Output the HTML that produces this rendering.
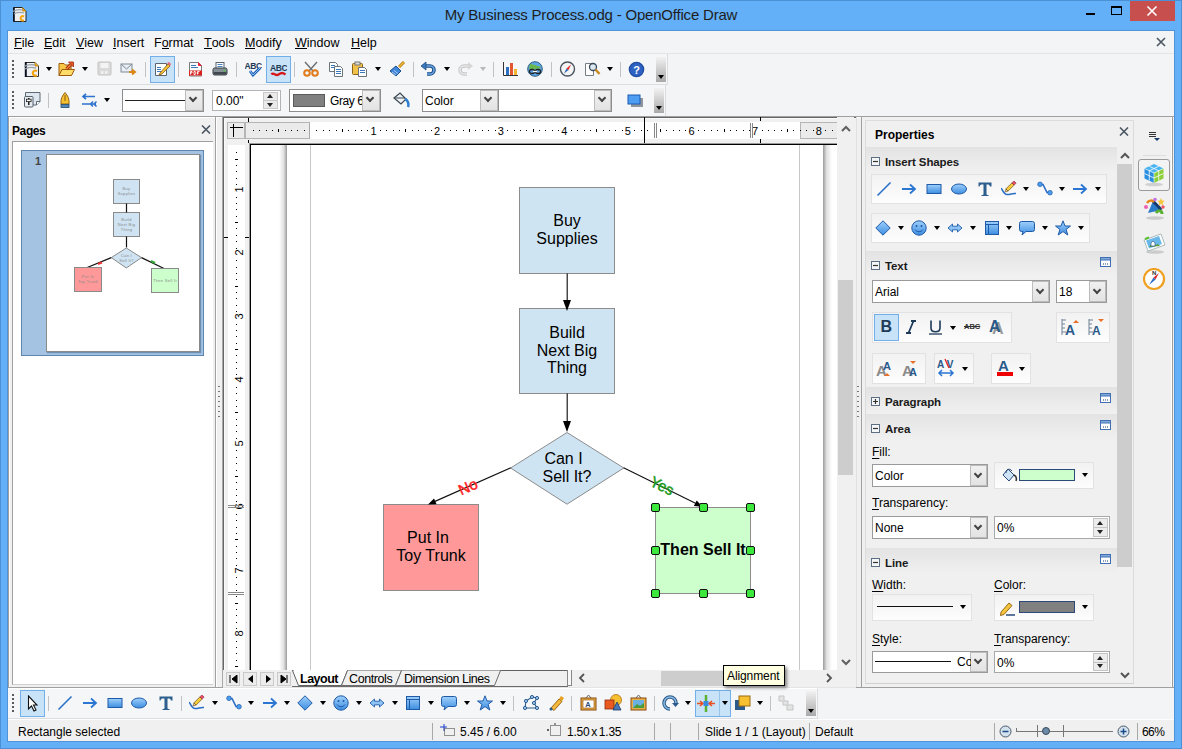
<!DOCTYPE html>
<html><head><meta charset="utf-8">
<style>
*{box-sizing:border-box;margin:0;padding:0}
html,body{width:1182px;height:749px;overflow:hidden}
body{position:relative;background:#63b0f8;font-family:"Liberation Sans",sans-serif;font-size:12px;color:#000}
.a,svg{position:absolute}
.t{position:absolute;white-space:nowrap;line-height:1}
#frame{left:0;top:0;width:1182px;height:749px;border:1px solid #4b8fd4}
#title{left:0;top:7px;width:1182px;text-align:center;font-size:15px;color:#1e1e1e;letter-spacing:-0.2px}
#client{left:7px;top:30px;width:1168px;height:712px;background:#f3f4f6;border:1px solid #4f93d8}
.menu{top:37px;font-size:12.5px;color:#000}
.menu u{text-decoration:none;border-bottom:1px solid #000;display:inline-block;line-height:10px}
.sep{position:absolute;width:1px;height:15px;background:#c2c2c2}
.grip{position:absolute;width:2px;background:repeating-linear-gradient(#5a5a5a 0 2px,transparent 2px 4px)}
.dd{position:absolute;width:0;height:0;border-left:3.5px solid transparent;border-right:3.5px solid transparent;border-top:4px solid #000}
.hl{position:absolute;background:#c8e2f8;border:1px solid #72aee8}
.combo{position:absolute;background:#fff;border:1px solid #a9a9a9}
.cbtn{position:absolute;background:linear-gradient(#f0f0f0,#e3e3e3);border:1px solid #bcbcbc}
.chev{position:absolute;width:7px;height:7px;border-right:2px solid #444;border-bottom:2px solid #444;transform:rotate(45deg)}
.tbend{position:absolute;width:10px;background:linear-gradient(#f2f2f2,#a9a9a9)}
.tbend:after{content:"";position:absolute;left:2px;bottom:3px;border-left:3px solid transparent;border-right:3px solid transparent;border-top:4px solid #000}
</style></head><body>
<div class="a" id="frame"></div>
<div class="a" id="client"></div>
<div class="t" id="title">My Business Process.odg - OpenOffice Draw</div>
<!-- app icon -->
<svg style="left:13px;top:7px" width="14" height="15" viewBox="0 0 14 15"><path d="M.5 .5h9l3.5 3.5v10.5H.5z" fill="#eef0f2" stroke="#222"/><path d="M1 .5v14" stroke="#0a1020" stroke-width="1.6"/><path d="M9.5 .5v3.5H13" fill="#f0b020" stroke="#c88a10"/><path d="M-1 5c3-2 6-3 11-2M1 7c3-2 6-2 10-1" stroke="#9aa3ac" stroke-width="1.2" fill="none"/><path d="M11 9.5c-4-2-5 5 0 4" stroke="#f5a412" stroke-width="2" fill="none"/></svg>
<!-- window buttons -->
<div class="a" style="left:1086px;top:13px;width:9px;height:2px;background:#000"></div>
<div class="a" style="left:1111px;top:6px;width:11px;height:9px;border:1px solid #000;border-top-width:2px"></div>
<div class="a" style="left:1130px;top:1px;width:45px;height:20px;background:#c7504e"></div>
<svg style="left:1146px;top:5px" width="12" height="12" viewBox="0 0 12 12"><path d="M1.5 1.5l9 9M10.5 1.5l-9 9" stroke="#fff" stroke-width="1.6"/></svg>
<!-- menubar -->
<div class="a" style="left:8px;top:53px;width:1166px;height:1px;background:#e3e4e6"></div>
<div class="t menu" style="left:14px"><u>F</u>ile</div>
<div class="t menu" style="left:44px"><u>E</u>dit</div>
<div class="t menu" style="left:76px"><u>V</u>iew</div>
<div class="t menu" style="left:113px"><u>I</u>nsert</div>
<div class="t menu" style="left:154px">F<u>o</u>rmat</div>
<div class="t menu" style="left:204px"><u>T</u>ools</div>
<div class="t menu" style="left:245px"><u>M</u>odify</div>
<div class="t menu" style="left:295px"><u>W</u>indow</div>
<div class="t menu" style="left:351px"><u>H</u>elp</div>
<svg style="left:1156px;top:37px" width="10" height="10" viewBox="0 0 10 10"><path d="M1 1l8 8M9 1l-8 8" stroke="#4a5561" stroke-width="1.6"/></svg>
<!-- toolbar 1 -->
<div class="a" style="left:8px;top:54px;width:660px;height:31px;background:#f5f6f7;border-right:1px solid #dcdddf;border-bottom:1px solid #dcdddf"></div>
<div class="grip" style="left:12px;top:60px;height:18px"></div>
<!-- new -->
<svg style="left:24px;top:61px" width="16" height="16" viewBox="0 0 16 16"><path d="M1.5 1.5h9.5l3.5 3.5v10.5h-13z" fill="#eef0f2" stroke="#333"/><path d="M1.8 1v15" stroke="#0a1020" stroke-width="2"/><path d="M11 1.5v3.5h3.5" fill="#f0b020" stroke="#c88a10"/><path d="M-1 6c3-2 7-3 12-2M1 8c3-2 7-2 11-1" stroke="#9aa3ac" stroke-width="1.3" fill="none"/><path d="M13 10c-5-2.5-6 6 0 4.5" stroke="#f5a412" stroke-width="2.2" fill="none"/></svg>
<div class="dd" style="left:46px;top:67px"></div>
<!-- open -->
<svg style="left:58px;top:61px" width="17" height="16" viewBox="0 0 17 16"><path d="M1 2.5h5l1.5 1.5h5.5V14.5H1z" fill="#f6c846" stroke="#a05a10"/><path d="M4 8.5h12.5l-3 6H1z" fill="#fddc68" stroke="#a05a10"/><path d="M8.5 8l5-5" stroke="#a03010" stroke-width="3.2"/><path d="M8.5 8l5-5" stroke="#f27a3a" stroke-width="1.6"/><path d="M10.5 1h5v5z" fill="#e85a20" stroke="#a03010" stroke-width=".8"/></svg>
<div class="dd" style="left:82px;top:67px"></div>
<!-- save gray -->
<svg style="left:97px;top:61px" width="15" height="15" viewBox="0 0 15 15"><rect x="1" y="1" width="13" height="13" rx="1" fill="#dadada" stroke="#c4c4c4"/><rect x="3.5" y="2" width="8" height="5" fill="#f4f4f4"/><rect x="4" y="10" width="2.5" height="3" fill="#f0f0f0"/><rect x="8" y="10" width="2.5" height="3" fill="#f0f0f0"/></svg>
<!-- mail -->
<svg style="left:120px;top:62px" width="17" height="14" viewBox="0 0 17 14"><rect x="1" y="2" width="11" height="8" fill="#e8eef4" stroke="#7f8b96"/><path d="M1 2l5.5 5 5.5-5" stroke="#7f8b96" fill="none"/><path d="M9 10h5M12 7.5l3 2.5-3 2.5" stroke="#d9891a" stroke-width="2" fill="none"/></svg>
<div class="sep" style="left:145px;top:62px"></div>
<div class="hl" style="left:150px;top:56px;width:25px;height:27px"></div>
<svg style="left:154px;top:61px" width="17" height="16" viewBox="0 0 17 16"><path d="M1.5 2.5h11v12h-11z" fill="#fff" stroke="#5d6670"/><path d="M3 6.5h4M3 8.5h4M3 10.5h5" stroke="#3a78b8"/><path d="M6 12l8-9 2 2-8 8-3 1z" fill="#f6c43a" stroke="#8d5a10" stroke-width=".8"/><path d="M13 2l2-1 2 2-1 2z" fill="#e46a7a"/></svg>
<div class="sep" style="left:178px;top:62px"></div>
<!-- pdf -->
<svg style="left:188px;top:61px" width="15" height="16" viewBox="0 0 15 16"><path d="M1.5 1.5h9l3 3V15h-12z" fill="#fafafa" stroke="#7a7a7a"/><path d="M3 4.5h5M3 6.5h7" stroke="#3a78b8"/><path d="M10.5 1.5v3h3" fill="#e23" stroke="#e23"/><rect x="1" y="9.5" width="13" height="5" fill="#d8221f"/><path d="M2.5 13.5v-3h1.5v1.5h-1.5M6 10.5v3h1.2l.8-1.5-.8-1.5zM9.5 13.5v-3h2M9.5 12h1.5" stroke="#fff" stroke-width=".9" fill="none"/></svg>
<!-- print -->
<svg style="left:212px;top:61px" width="16" height="16" viewBox="0 0 16 16"><rect x="4" y="1.5" width="8" height="6" fill="#fff" stroke="#5a6470"/><path d="M5.5 3.5h5M5.5 5.5h5" stroke="#3a78b8" stroke-width=".9"/><rect x="1" y="7" width="14" height="7" rx="1.5" fill="#868e96" stroke="#3b4249"/><rect x="1.5" y="11" width="13" height="2.5" fill="#40474e"/><circle cx="12.5" cy="9.5" r="1" fill="#4ec23d"/></svg>
<div class="sep" style="left:236px;top:62px"></div>
<!-- spell -->
<svg style="left:245px;top:61px" width="17" height="16" viewBox="0 0 17 16"><text x="-.5" y="7.5" font-family="Liberation Sans" font-weight="bold" font-size="8.5" letter-spacing="-.4" fill="#1f3a55">ABC</text><path d="M5 10l3 4 7-7" stroke="#1f5fb5" stroke-width="2.8" fill="none"/><path d="M5 10l3 4 7-7" stroke="#8ec3f5" stroke-width="1" fill="none"/></svg>
<div class="sep" style="left:262px;top:61px;height:0"></div>
<div class="hl" style="left:266px;top:56px;width:25px;height:27px"></div>
<svg style="left:270px;top:62px" width="17" height="15" viewBox="0 0 17 15"><text x="0" y="8.5" font-family="Liberation Sans" font-weight="bold" font-size="8.5" letter-spacing="-.4" fill="#1f3a55">ABC</text><path d="M1.5 12.5c2-3 4 2 7 0s4-2 7 0" stroke="#d81818" stroke-width="2.4" fill="none"/></svg>
<div class="sep" style="left:294px;top:62px"></div>
<!-- cut -->
<svg style="left:302px;top:61px" width="18" height="16" viewBox="0 0 18 16"><path d="M3 1l8 9M15 1l-8 9" stroke="#6d7378" stroke-width="1.5"/><circle cx="5" cy="12" r="2.8" fill="none" stroke="#e07a1a" stroke-width="2"/><circle cx="13" cy="12" r="2.8" fill="none" stroke="#e07a1a" stroke-width="2"/></svg>
<!-- copy -->
<svg style="left:328px;top:61px" width="16" height="16" viewBox="0 0 16 16"><path d="M1.5 1.5h6l2 2v7h-8z" fill="#fff" stroke="#6b737b"/><path d="M3 4.5h4M3 6.5h4" stroke="#3a78b8"/><path d="M6.5 5.5h6l2 2v8h-8z" fill="#fff" stroke="#6b737b"/><path d="M8 8.5h5M8 10.5h5M8 12.5h5" stroke="#3a78b8"/></svg>
<!-- paste -->
<svg style="left:351px;top:61px" width="17" height="16" viewBox="0 0 17 16"><rect x="1.5" y="2.5" width="10" height="11" rx="1" fill="#f2c14a" stroke="#8c6418"/><rect x="4" y="1" width="5" height="3" fill="#ddd" stroke="#777"/><path d="M7.5 6.5h6l2 2v7h-8z" fill="#fff" stroke="#6b737b"/><path d="M9 9.5h5M9 11.5h5" stroke="#3a78b8"/></svg>
<div class="dd" style="left:375px;top:67px"></div>
<!-- clone -->
<svg style="left:389px;top:61px" width="17" height="16" viewBox="0 0 17 16"><path d="M1 10l6-5 5 5-5 5z" fill="#3f86d8" stroke="#1b4f8f"/><path d="M3 11l4 3M5 9.5l4 3" stroke="#a8cdf4"/><path d="M10 6l5-5" stroke="#b07a10" stroke-width="3"/><path d="M10 6l5-5" stroke="#f0b93a" stroke-width="1.5"/></svg>
<div class="sep" style="left:413px;top:62px"></div>
<!-- undo -->
<svg style="left:420px;top:61px" width="17" height="16" viewBox="0 0 17 16"><path d="M4 5h6a4 4 0 0 1 0 8H7" stroke="#1d4e86" stroke-width="3.6" fill="none"/><path d="M4 5h6a4 4 0 0 1 0 8H7" stroke="#6aa6e3" stroke-width="1.6" fill="none"/><path d="M1 5l5-4v8z" fill="#3c78bd" stroke="#1d4e86" stroke-width=".8"/></svg>
<div class="dd" style="left:444px;top:67px"></div>
<!-- redo gray -->
<svg style="left:457px;top:61px" width="17" height="16" viewBox="0 0 17 16"><path d="M13 5H7a4 4 0 0 0 0 8h3" stroke="#c8c8c8" stroke-width="3.6" fill="none"/><path d="M13 5H7a4 4 0 0 0 0 8h3" stroke="#e6e6e6" stroke-width="1.6" fill="none"/><path d="M16 5l-5-4v8z" fill="#d6d6d6"/></svg>
<div class="dd" style="left:480px;top:67px;border-top-color:#b8b8b8"></div>
<div class="sep" style="left:493px;top:62px"></div>
<!-- chart -->
<svg style="left:502px;top:61px" width="17" height="16" viewBox="0 0 17 16"><path d="M1.5 1v13.5H16" stroke="#333" fill="none"/><rect x="4" y="6" width="3" height="8" fill="#2f6fbf"/><rect x="8" y="2" width="3" height="12" fill="#e4572e"/><rect x="12" y="8" width="3" height="6" fill="#f2b631"/></svg>
<!-- globe -->
<svg style="left:527px;top:61px" width="16" height="16" viewBox="0 0 16 16"><circle cx="8" cy="8" r="7.3" fill="#5ea6e6" stroke="#2d5e80"/><path d="M3 3c2 0 3 1 5 1s2 2 4 1l2 2c-2 1-3 0-5 1S5 7 2 8z" fill="#6ab84a"/><rect x="2.5" y="8.5" width="5" height="4" rx="2" fill="none" stroke="#222" stroke-width="1.3"/><rect x="8.5" y="8.5" width="5" height="4" rx="2" fill="none" stroke="#222" stroke-width="1.3"/><path d="M6 10.5h4" stroke="#fff" stroke-width="1.3"/></svg>
<div class="sep" style="left:551px;top:62px"></div>
<!-- navigator -->
<svg style="left:559px;top:61px" width="17" height="16" viewBox="0 0 17 16"><circle cx="8.5" cy="8" r="7" fill="#f4f4f4" stroke="#4b5560" stroke-width="1.4"/><path d="M12 3.5L7.5 7.5 9.5 9z" fill="#e22"/><path d="M5 12.5l2.5-5 2 1.5z" fill="#2c64b0"/></svg>
<!-- zoom -->
<svg style="left:584px;top:61px" width="17" height="16" viewBox="0 0 17 16"><path d="M1.5 2.5h8v12h-8z" fill="#fff" stroke="#747c84"/><circle cx="9" cy="6" r="3.5" fill="#dbe8f4" stroke="#3a4a5a" stroke-width="1.3"/><path d="M11.5 8.5l4 4.5" stroke="#c88a1e" stroke-width="2.4"/></svg>
<div class="dd" style="left:607px;top:67px"></div>
<div class="sep" style="left:620px;top:62px"></div>
<!-- help -->
<svg style="left:628px;top:61px" width="17" height="17" viewBox="0 0 17 17"><circle cx="8.5" cy="8.5" r="7.8" fill="#1f4ea3"/><circle cx="8.5" cy="8.5" r="6.5" fill="#2e62c2"/><text x="8.5" y="13" text-anchor="middle" font-family="Liberation Sans" font-weight="bold" font-size="11" fill="#fff">?</text></svg>
<div class="tbend" style="left:656px;top:57px;height:25px"></div>
<!-- toolbar 2 -->
<div class="a" style="left:8px;top:85px;width:658px;height:31px;background:#f5f6f7;border-right:1px solid #dcdddf"></div>
<div class="grip" style="left:12px;top:91px;height:18px"></div>
<svg style="left:24px;top:92px" width="17" height="16" viewBox="0 0 17 16"><path d="M1.5.5h14.5v9l-3.5 3.5H1.5z" fill="#dde5ee" stroke="#5f6a75"/><path d="M12.5 13v-3.5H16" fill="#fff" stroke="#5f6a75"/><rect x=".5" y="4.5" width="8.5" height="10.5" rx="1" fill="#e8ecf0" stroke="#56616c"/><path d="M4.8 6v7" stroke="#111" stroke-width="1.4"/><rect x="2.5" y="7.2" width="4.6" height="2.4" fill="#fff" stroke="#222" stroke-width=".8"/></svg>
<div class="sep" style="left:48px;top:93px"></div>
<svg style="left:60px;top:92px" width="10" height="16" viewBox="0 0 10 16"><path d="M5 .5C8 4 9.5 7 9 12H1C.5 7 2 4 5 .5z" fill="#f6c12f" stroke="#8a5a12" stroke-width=".9"/><path d="M5 3v6" stroke="#8a5a12"/><rect x="1" y="12.5" width="8" height="3" fill="#4f86b8" stroke="#234a6a" stroke-width=".8"/></svg>
<svg style="left:81px;top:93px" width="17" height="14" viewBox="0 0 17 14"><path d="M2 3.5h12M5 .8L2 3.5 5 6.2" stroke="#2e73cf" stroke-width="1.7" fill="none"/><path d="M1 11h14M12 8.5L9.5 11l2.5 2.5M15.5 8.5L13 11l2.5 2.5" stroke="#2e73cf" stroke-width="1.5" fill="none"/></svg>
<div class="dd" style="left:104px;top:98px"></div>
<!-- line style combo -->
<div class="combo" style="left:122px;top:89px;width:82px;height:23px;border-color:#8e8e8e"></div>
<div class="a" style="left:125px;top:100px;width:60px;height:1px;background:#222"></div>
<div class="cbtn" style="left:185px;top:90px;width:18px;height:21px"></div>
<div class="chev" style="left:190px;top:95px;width:6px;height:6px;border-width:0 2px 2px 0"></div>
<!-- width spin -->
<div class="combo" style="left:212px;top:90px;width:69px;height:21px;border-color:#b3b3b3"></div>
<div class="t" style="left:216px;top:95px;font-size:12px">0.00"</div>
<div class="a" style="left:263px;top:92px;width:15px;height:17px;background:#eaeaea;border:1px solid #c9c9c9"></div>
<div class="a" style="left:263px;top:100px;width:15px;height:1px;background:#c9c9c9"></div>
<div class="a" style="left:267px;top:94px;border-left:3.5px solid transparent;border-right:3.5px solid transparent;border-bottom:4px solid #222"></div>
<div class="a" style="left:267px;top:103px;border-left:3.5px solid transparent;border-right:3.5px solid transparent;border-top:4px solid #222"></div>
<!-- color combo -->
<div class="combo" style="left:289px;top:89px;width:92px;height:23px;border-color:#8e8e8e"></div>
<div class="a" style="left:293px;top:94px;width:32px;height:13px;background:#808080;border:1px solid #5a5a5a"></div>
<div class="t" style="left:330px;top:95px;font-size:12px;letter-spacing:-.4px">Gray 6</div>
<div class="cbtn" style="left:362px;top:90px;width:18px;height:21px"></div>
<div class="chev" style="left:367px;top:95px;width:6px;height:6px;border-width:0 2px 2px 0"></div>
<!-- bucket -->
<svg style="left:392px;top:92px" width="18" height="16" viewBox="0 0 18 16"><path d="M2 6l6-5 6 6-5 5z" fill="#eef2f6" stroke="#3b4650" stroke-width="1.2"/><path d="M3 6h10" stroke="#3b4650"/><path d="M13 7c3 1 4 5 3 8" stroke="#2f7fd0" stroke-width="2.5" fill="none"/></svg>
<!-- area combos -->
<div class="combo" style="left:422px;top:89px;width:77px;height:23px;border-color:#8e8e8e"></div>
<div class="t" style="left:425px;top:95px;font-size:12px">Color</div>
<div class="cbtn" style="left:480px;top:90px;width:18px;height:21px"></div>
<div class="chev" style="left:485px;top:95px;width:6px;height:6px;border-width:0 2px 2px 0"></div>
<div class="combo" style="left:498px;top:89px;width:114px;height:23px;border-color:#8e8e8e"></div>
<div class="cbtn" style="left:594px;top:90px;width:17px;height:21px"></div>
<div class="chev" style="left:599px;top:95px;width:6px;height:6px;border-width:0 2px 2px 0"></div>
<!-- shadow -->
<svg style="left:627px;top:93px" width="17" height="15" viewBox="0 0 17 15"><rect x="4" y="5" width="12" height="9" fill="#8f969d"/><rect x="1" y="2" width="12" height="9" fill="#4d9ef2" stroke="#1d5bb0"/></svg>
<div class="tbend" style="left:654px;top:88px;height:25px"></div>
<div class="a" style="left:8px;top:116px;width:1166px;height:1px;background:#a0a0a0"></div>
<div class="a" style="left:8px;top:117px;width:1166px;height:570px;background:#f0f0f0;border-top:1px solid #fff"></div>
<div class="a" style="left:8px;top:116px;width:1px;height:571px;background:#a0a0a0"></div>
<div class="a" style="left:9px;top:117px;width:1px;height:570px;background:#fff"></div>
<div class="a" style="left:215px;top:116px;width:1px;height:571px;background:#a0a0a0"></div>
<div class="a" style="left:216px;top:117px;width:1px;height:570px;background:#fff"></div>
<div class="t" style="left:12px;top:125px;font-weight:bold;font-size:12px;letter-spacing:-.4px">Pages</div>
<svg style="left:201px;top:125px" width="10" height="9" viewBox="0 0 10 9"><path d="M1 .5l8 8M9 .5l-8 8" stroke="#4d5864" stroke-width="1.6"/></svg>
<div class="a" style="left:12px;top:141px;width:201px;height:544px;background:#fff;border-top:1px solid #a0a0a0;border-left:1px solid #a0a0a0;border-bottom:1px solid #d0d0d0"></div>
<div class="a" style="left:21px;top:150px;width:183px;height:206px;background:#a4c2e2;border:1px solid #5f86b0"></div>
<div class="t" style="left:35px;top:156px;font-weight:bold;font-size:11px;color:#444">1</div>
<div class="a" style="left:46px;top:154px;width:154px;height:198px;background:#fff;border:1px solid #8a8a8a;box-shadow:1px 1px 1px #6f8fb0"></div>
<svg style="left:46px;top:154px" width="154" height="198" viewBox="0 0 154 198">
<rect x="67.5" y="25.5" width="26" height="24" fill="#cfe3f2" stroke="#8a8a8a"/>
<rect x="67.5" y="58.5" width="26" height="24" fill="#cfe3f2" stroke="#8a8a8a"/>
<path d="M80.5 49.5v9M80.5 82.5v11" stroke="#111" stroke-width="1.2"/>
<path d="M80.3 94L95.5 103.6 80.3 114 65.3 103.6z" fill="#cfe3f2" stroke="#8a8a8a"/>
<path d="M65.3 103.6L40 114M95.5 103.6L118 114.5" stroke="#111" stroke-width="1.2"/>
<path d="M52 110l4-1.5" stroke="#e33" stroke-width="2"/><path d="M105 107l4 2" stroke="#3a3" stroke-width="2"/>
<rect x="28.5" y="113.5" width="27" height="24" fill="#f99" stroke="#8a8a8a"/>
<rect x="105.5" y="114.5" width="27" height="24" fill="#cfc" stroke="#8a8a8a"/>
<g transform="scale(.5)" style="font-family:'Liberation Sans';font-size:8px;letter-spacing:.6px" fill="#8a8a8a" text-anchor="middle"><text x="161.0" y="72">Buy</text><text x="161.0" y="82">Supplies</text><text x="161.0" y="134">Build</text><text x="161.0" y="144">Next Big</text><text x="161.0" y="154">Thing</text><text x="161.0" y="206">Can I</text><text x="161.0" y="216">Sell It?</text><text x="84.0" y="248">Put In</text><text x="84.0" y="258">Toy Trunk</text><text x="238.0" y="256">Then Sell It</text></g></svg>
<div class="a" style="left:222px;top:117px;width:1px;height:570px;background:#a8a8a8"></div>
<div class="a" style="left:218px;top:386px;width:2px;height:33px;background:repeating-linear-gradient(#777 0 1px,transparent 1px 5px)"></div>
<div class="a" style="left:223px;top:117px;width:634px;height:570px;background:#f0f0f0;border-left:1px solid #666;border-top:1px solid #666"></div>
<div class="a" style="left:224px;top:118px;width:633px;height:1px;background:#fafafa"></div>
<div class="a" style="left:224px;top:118px;width:1px;height:569px;background:#fafafa"></div>
<div class="a" style="left:227px;top:122px;width:18px;height:17px;background:#ebebeb;border:1px solid #b5b5b5"></div>
<div class="a" style="left:233px;top:124px;width:1px;height:13px;background:#000"></div>
<div class="a" style="left:230px;top:127px;width:13px;height:1px;background:#000"></div>
<div class="a" style="left:245px;top:122px;width:592px;height:17px;background:#fff"></div>
<div class="a" style="left:245px;top:122px;width:65px;height:17px;background:#ebebeb;border:1px solid #b5b5b5;border-right-color:#a8a8a8"></div>
<div class="a" style="left:800px;top:122px;width:37px;height:17px;background:#ebebeb;border:1px solid #b5b5b5;border-right:0"></div>
<div class="a" style="left:253px;top:130px;width:1px;height:1px;background:#000"></div>
<div class="a" style="left:259px;top:130px;width:1px;height:1px;background:#000"></div>
<div class="a" style="left:266px;top:130px;width:1px;height:1px;background:#000"></div>
<div class="a" style="left:272px;top:130px;width:1px;height:1px;background:#000"></div>
<div class="a" style="left:278px;top:129px;width:1px;height:3px;background:#000"></div>
<div class="a" style="left:285px;top:130px;width:1px;height:1px;background:#000"></div>
<div class="a" style="left:291px;top:130px;width:1px;height:1px;background:#000"></div>
<div class="a" style="left:297px;top:130px;width:1px;height:1px;background:#000"></div>
<div class="a" style="left:304px;top:130px;width:1px;height:1px;background:#000"></div>
<div class="a" style="left:316px;top:130px;width:1px;height:1px;background:#000"></div>
<div class="a" style="left:323px;top:130px;width:1px;height:1px;background:#000"></div>
<div class="a" style="left:329px;top:130px;width:1px;height:1px;background:#000"></div>
<div class="a" style="left:336px;top:130px;width:1px;height:1px;background:#000"></div>
<div class="a" style="left:342px;top:129px;width:1px;height:3px;background:#000"></div>
<div class="a" style="left:348px;top:130px;width:1px;height:1px;background:#000"></div>
<div class="a" style="left:355px;top:130px;width:1px;height:1px;background:#000"></div>
<div class="a" style="left:361px;top:130px;width:1px;height:1px;background:#000"></div>
<div class="a" style="left:367px;top:130px;width:1px;height:1px;background:#000"></div>
<div class="t" style="left:370.0px;top:126px;font-size:11px;width:7px;text-align:center">1</div>
<div class="a" style="left:380px;top:130px;width:1px;height:1px;background:#000"></div>
<div class="a" style="left:386px;top:130px;width:1px;height:1px;background:#000"></div>
<div class="a" style="left:393px;top:130px;width:1px;height:1px;background:#000"></div>
<div class="a" style="left:399px;top:130px;width:1px;height:1px;background:#000"></div>
<div class="a" style="left:405px;top:129px;width:1px;height:3px;background:#000"></div>
<div class="a" style="left:412px;top:130px;width:1px;height:1px;background:#000"></div>
<div class="a" style="left:418px;top:130px;width:1px;height:1px;background:#000"></div>
<div class="a" style="left:425px;top:130px;width:1px;height:1px;background:#000"></div>
<div class="a" style="left:431px;top:130px;width:1px;height:1px;background:#000"></div>
<div class="t" style="left:433.6px;top:126px;font-size:11px;width:7px;text-align:center">2</div>
<div class="a" style="left:444px;top:130px;width:1px;height:1px;background:#000"></div>
<div class="a" style="left:450px;top:130px;width:1px;height:1px;background:#000"></div>
<div class="a" style="left:456px;top:130px;width:1px;height:1px;background:#000"></div>
<div class="a" style="left:463px;top:130px;width:1px;height:1px;background:#000"></div>
<div class="a" style="left:469px;top:129px;width:1px;height:3px;background:#000"></div>
<div class="a" style="left:475px;top:130px;width:1px;height:1px;background:#000"></div>
<div class="a" style="left:482px;top:130px;width:1px;height:1px;background:#000"></div>
<div class="a" style="left:488px;top:130px;width:1px;height:1px;background:#000"></div>
<div class="a" style="left:495px;top:130px;width:1px;height:1px;background:#000"></div>
<div class="t" style="left:497.2px;top:126px;font-size:11px;width:7px;text-align:center">3</div>
<div class="a" style="left:507px;top:130px;width:1px;height:1px;background:#000"></div>
<div class="a" style="left:514px;top:130px;width:1px;height:1px;background:#000"></div>
<div class="a" style="left:520px;top:130px;width:1px;height:1px;background:#000"></div>
<div class="a" style="left:526px;top:130px;width:1px;height:1px;background:#000"></div>
<div class="a" style="left:533px;top:129px;width:1px;height:3px;background:#000"></div>
<div class="a" style="left:539px;top:130px;width:1px;height:1px;background:#000"></div>
<div class="a" style="left:545px;top:130px;width:1px;height:1px;background:#000"></div>
<div class="a" style="left:552px;top:130px;width:1px;height:1px;background:#000"></div>
<div class="a" style="left:558px;top:130px;width:1px;height:1px;background:#000"></div>
<div class="t" style="left:560.8px;top:126px;font-size:11px;width:7px;text-align:center">4</div>
<div class="a" style="left:571px;top:130px;width:1px;height:1px;background:#000"></div>
<div class="a" style="left:577px;top:130px;width:1px;height:1px;background:#000"></div>
<div class="a" style="left:584px;top:130px;width:1px;height:1px;background:#000"></div>
<div class="a" style="left:590px;top:130px;width:1px;height:1px;background:#000"></div>
<div class="a" style="left:596px;top:129px;width:1px;height:3px;background:#000"></div>
<div class="a" style="left:603px;top:130px;width:1px;height:1px;background:#000"></div>
<div class="a" style="left:609px;top:130px;width:1px;height:1px;background:#000"></div>
<div class="a" style="left:615px;top:130px;width:1px;height:1px;background:#000"></div>
<div class="a" style="left:622px;top:130px;width:1px;height:1px;background:#000"></div>
<div class="t" style="left:624.4px;top:126px;font-size:11px;width:7px;text-align:center">5</div>
<div class="a" style="left:634px;top:130px;width:1px;height:1px;background:#000"></div>
<div class="a" style="left:641px;top:130px;width:1px;height:1px;background:#000"></div>
<div class="a" style="left:647px;top:130px;width:1px;height:1px;background:#000"></div>
<div class="a" style="left:654px;top:130px;width:1px;height:1px;background:#000"></div>
<div class="a" style="left:660px;top:129px;width:1px;height:3px;background:#000"></div>
<div class="a" style="left:666px;top:130px;width:1px;height:1px;background:#000"></div>
<div class="a" style="left:673px;top:130px;width:1px;height:1px;background:#000"></div>
<div class="a" style="left:679px;top:130px;width:1px;height:1px;background:#000"></div>
<div class="a" style="left:685px;top:130px;width:1px;height:1px;background:#000"></div>
<div class="t" style="left:688.0px;top:126px;font-size:11px;width:7px;text-align:center">6</div>
<div class="a" style="left:698px;top:130px;width:1px;height:1px;background:#000"></div>
<div class="a" style="left:704px;top:130px;width:1px;height:1px;background:#000"></div>
<div class="a" style="left:711px;top:130px;width:1px;height:1px;background:#000"></div>
<div class="a" style="left:717px;top:130px;width:1px;height:1px;background:#000"></div>
<div class="a" style="left:724px;top:129px;width:1px;height:3px;background:#000"></div>
<div class="a" style="left:730px;top:130px;width:1px;height:1px;background:#000"></div>
<div class="a" style="left:736px;top:130px;width:1px;height:1px;background:#000"></div>
<div class="a" style="left:743px;top:130px;width:1px;height:1px;background:#000"></div>
<div class="a" style="left:749px;top:130px;width:1px;height:1px;background:#000"></div>
<div class="t" style="left:751.6px;top:126px;font-size:11px;width:7px;text-align:center">7</div>
<div class="a" style="left:762px;top:130px;width:1px;height:1px;background:#000"></div>
<div class="a" style="left:768px;top:130px;width:1px;height:1px;background:#000"></div>
<div class="a" style="left:774px;top:130px;width:1px;height:1px;background:#000"></div>
<div class="a" style="left:781px;top:130px;width:1px;height:1px;background:#000"></div>
<div class="a" style="left:787px;top:129px;width:1px;height:3px;background:#000"></div>
<div class="a" style="left:793px;top:130px;width:1px;height:1px;background:#000"></div>
<div class="a" style="left:800px;top:130px;width:1px;height:1px;background:#000"></div>
<div class="a" style="left:806px;top:130px;width:1px;height:1px;background:#000"></div>
<div class="a" style="left:813px;top:130px;width:1px;height:1px;background:#000"></div>
<div class="t" style="left:815.2px;top:126px;font-size:11px;width:7px;text-align:center">8</div>
<div class="a" style="left:825px;top:130px;width:1px;height:1px;background:#000"></div>
<div class="a" style="left:832px;top:130px;width:1px;height:1px;background:#000"></div>
<div class="a" style="left:644px;top:117px;width:1px;height:26px;background:#000"></div>
<div class="a" style="left:654px;top:123px;width:1px;height:15px;background:#888"></div>
<div class="a" style="left:656px;top:123px;width:1px;height:15px;background:#888"></div>
<div class="a" style="left:750px;top:123px;width:1px;height:15px;background:#888"></div>
<div class="a" style="left:752px;top:123px;width:1px;height:15px;background:#888"></div>
<div class="a" style="left:760px;top:117px;width:1px;height:4px;background:#000"></div>
<div class="a" style="left:760px;top:139px;width:1px;height:4px;background:#000"></div>
<div class="a" style="left:248px;top:118px;width:1px;height:4px;background:#000"></div>
<div class="a" style="left:248px;top:140px;width:1px;height:3px;background:#000"></div>
<div class="a" style="left:228px;top:145px;width:17px;height:525px;background:#fff"></div>
<div class="a" style="left:236px;top:152px;width:1px;height:1px;background:#000"></div>
<div class="a" style="left:235px;top:159px;width:3px;height:1px;background:#000"></div>
<div class="a" style="left:236px;top:165px;width:1px;height:1px;background:#000"></div>
<div class="a" style="left:236px;top:171px;width:1px;height:1px;background:#000"></div>
<div class="a" style="left:236px;top:178px;width:1px;height:1px;background:#000"></div>
<div class="a" style="left:236px;top:184px;width:1px;height:1px;background:#000"></div>
<div class="t" style="left:234px;top:184.9px;font-size:11px;width:9px;height:9px;text-align:center;transform:rotate(-90deg)">1</div>
<div class="a" style="left:236px;top:197px;width:1px;height:1px;background:#000"></div>
<div class="a" style="left:236px;top:203px;width:1px;height:1px;background:#000"></div>
<div class="a" style="left:236px;top:209px;width:1px;height:1px;background:#000"></div>
<div class="a" style="left:236px;top:216px;width:1px;height:1px;background:#000"></div>
<div class="a" style="left:235px;top:222px;width:3px;height:1px;background:#000"></div>
<div class="a" style="left:236px;top:228px;width:1px;height:1px;background:#000"></div>
<div class="a" style="left:236px;top:235px;width:1px;height:1px;background:#000"></div>
<div class="a" style="left:236px;top:241px;width:1px;height:1px;background:#000"></div>
<div class="a" style="left:236px;top:248px;width:1px;height:1px;background:#000"></div>
<div class="t" style="left:234px;top:248.4px;font-size:11px;width:9px;height:9px;text-align:center;transform:rotate(-90deg)">2</div>
<div class="a" style="left:236px;top:260px;width:1px;height:1px;background:#000"></div>
<div class="a" style="left:236px;top:267px;width:1px;height:1px;background:#000"></div>
<div class="a" style="left:236px;top:273px;width:1px;height:1px;background:#000"></div>
<div class="a" style="left:236px;top:279px;width:1px;height:1px;background:#000"></div>
<div class="a" style="left:235px;top:286px;width:3px;height:1px;background:#000"></div>
<div class="a" style="left:236px;top:292px;width:1px;height:1px;background:#000"></div>
<div class="a" style="left:236px;top:298px;width:1px;height:1px;background:#000"></div>
<div class="a" style="left:236px;top:305px;width:1px;height:1px;background:#000"></div>
<div class="a" style="left:236px;top:311px;width:1px;height:1px;background:#000"></div>
<div class="t" style="left:234px;top:311.8px;font-size:11px;width:9px;height:9px;text-align:center;transform:rotate(-90deg)">3</div>
<div class="a" style="left:236px;top:324px;width:1px;height:1px;background:#000"></div>
<div class="a" style="left:236px;top:330px;width:1px;height:1px;background:#000"></div>
<div class="a" style="left:236px;top:336px;width:1px;height:1px;background:#000"></div>
<div class="a" style="left:236px;top:343px;width:1px;height:1px;background:#000"></div>
<div class="a" style="left:235px;top:349px;width:3px;height:1px;background:#000"></div>
<div class="a" style="left:236px;top:355px;width:1px;height:1px;background:#000"></div>
<div class="a" style="left:236px;top:362px;width:1px;height:1px;background:#000"></div>
<div class="a" style="left:236px;top:368px;width:1px;height:1px;background:#000"></div>
<div class="a" style="left:236px;top:374px;width:1px;height:1px;background:#000"></div>
<div class="t" style="left:234px;top:375.2px;font-size:11px;width:9px;height:9px;text-align:center;transform:rotate(-90deg)">4</div>
<div class="a" style="left:236px;top:387px;width:1px;height:1px;background:#000"></div>
<div class="a" style="left:236px;top:393px;width:1px;height:1px;background:#000"></div>
<div class="a" style="left:236px;top:400px;width:1px;height:1px;background:#000"></div>
<div class="a" style="left:236px;top:406px;width:1px;height:1px;background:#000"></div>
<div class="a" style="left:235px;top:412px;width:3px;height:1px;background:#000"></div>
<div class="a" style="left:236px;top:419px;width:1px;height:1px;background:#000"></div>
<div class="a" style="left:236px;top:425px;width:1px;height:1px;background:#000"></div>
<div class="a" style="left:236px;top:431px;width:1px;height:1px;background:#000"></div>
<div class="a" style="left:236px;top:438px;width:1px;height:1px;background:#000"></div>
<div class="t" style="left:234px;top:438.6px;font-size:11px;width:9px;height:9px;text-align:center;transform:rotate(-90deg)">5</div>
<div class="a" style="left:236px;top:450px;width:1px;height:1px;background:#000"></div>
<div class="a" style="left:236px;top:457px;width:1px;height:1px;background:#000"></div>
<div class="a" style="left:236px;top:463px;width:1px;height:1px;background:#000"></div>
<div class="a" style="left:236px;top:470px;width:1px;height:1px;background:#000"></div>
<div class="a" style="left:235px;top:476px;width:3px;height:1px;background:#000"></div>
<div class="a" style="left:236px;top:482px;width:1px;height:1px;background:#000"></div>
<div class="a" style="left:236px;top:489px;width:1px;height:1px;background:#000"></div>
<div class="a" style="left:236px;top:495px;width:1px;height:1px;background:#000"></div>
<div class="a" style="left:236px;top:501px;width:1px;height:1px;background:#000"></div>
<div class="t" style="left:234px;top:502.1px;font-size:11px;width:9px;height:9px;text-align:center;transform:rotate(-90deg)">6</div>
<div class="a" style="left:236px;top:514px;width:1px;height:1px;background:#000"></div>
<div class="a" style="left:236px;top:520px;width:1px;height:1px;background:#000"></div>
<div class="a" style="left:236px;top:527px;width:1px;height:1px;background:#000"></div>
<div class="a" style="left:236px;top:533px;width:1px;height:1px;background:#000"></div>
<div class="a" style="left:235px;top:539px;width:3px;height:1px;background:#000"></div>
<div class="a" style="left:236px;top:546px;width:1px;height:1px;background:#000"></div>
<div class="a" style="left:236px;top:552px;width:1px;height:1px;background:#000"></div>
<div class="a" style="left:236px;top:558px;width:1px;height:1px;background:#000"></div>
<div class="a" style="left:236px;top:565px;width:1px;height:1px;background:#000"></div>
<div class="t" style="left:234px;top:565.5px;font-size:11px;width:9px;height:9px;text-align:center;transform:rotate(-90deg)">7</div>
<div class="a" style="left:236px;top:577px;width:1px;height:1px;background:#000"></div>
<div class="a" style="left:236px;top:584px;width:1px;height:1px;background:#000"></div>
<div class="a" style="left:236px;top:590px;width:1px;height:1px;background:#000"></div>
<div class="a" style="left:236px;top:596px;width:1px;height:1px;background:#000"></div>
<div class="a" style="left:235px;top:603px;width:3px;height:1px;background:#000"></div>
<div class="a" style="left:236px;top:609px;width:1px;height:1px;background:#000"></div>
<div class="a" style="left:236px;top:615px;width:1px;height:1px;background:#000"></div>
<div class="a" style="left:236px;top:622px;width:1px;height:1px;background:#000"></div>
<div class="a" style="left:236px;top:628px;width:1px;height:1px;background:#000"></div>
<div class="t" style="left:234px;top:628.9px;font-size:11px;width:9px;height:9px;text-align:center;transform:rotate(-90deg)">8</div>
<div class="a" style="left:236px;top:641px;width:1px;height:1px;background:#000"></div>
<div class="a" style="left:236px;top:647px;width:1px;height:1px;background:#000"></div>
<div class="a" style="left:236px;top:653px;width:1px;height:1px;background:#000"></div>
<div class="a" style="left:236px;top:660px;width:1px;height:1px;background:#000"></div>
<div class="a" style="left:235px;top:666px;width:3px;height:1px;background:#000"></div>
<div class="a" style="left:224px;top:237px;width:4px;height:1px;background:#000"></div>
<div class="a" style="left:245px;top:237px;width:4px;height:1px;background:#000"></div>
<div class="a" style="left:228px;top:505px;width:16px;height:1px;background:#888"></div>
<div class="a" style="left:228px;top:507px;width:16px;height:1px;background:#888"></div>
<div class="a" style="left:228px;top:592px;width:16px;height:1px;background:#888"></div>
<div class="a" style="left:228px;top:594px;width:16px;height:1px;background:#888"></div>
<div class="a" style="left:249px;top:143px;width:588px;height:527px;background:#fff;border-left:1px solid #9a9a9a;border-top:1px solid #9a9a9a"></div>
<div class="a" style="left:250px;top:144px;width:587px;height:526px;background:#fff;border-left:1px solid #000;border-top:1px solid #000"></div>
<div class="a" style="left:279px;top:145px;width:8px;height:525px;background:linear-gradient(90deg,#fff,#e0e0e0 60%,#9a9a9a)"></div>
<div class="a" style="left:310px;top:145px;width:1px;height:525px;background:#c8c8c8"></div>
<div class="a" style="left:799px;top:145px;width:1px;height:525px;background:#c8c8c8"></div>
<div class="a" style="left:823px;top:145px;width:9px;height:525px;background:linear-gradient(90deg,#9a9a9a,#e0e0e0 40%,#fff)"></div>
<div class="a" style="left:837px;top:117px;width:17px;height:570px;background:#f0f0f0"></div>
<svg style="left:841px;top:125px" width="10" height="7" viewBox="0 0 10 7"><path d="M1 6l4-4 4 4" stroke="#606060" stroke-width="2" fill="none"/></svg>
<svg style="left:841px;top:659px" width="10" height="7" viewBox="0 0 10 7"><path d="M1 1l4 4 4-4" stroke="#606060" stroke-width="2" fill="none"/></svg>
<div class="a" style="left:838px;top:280px;width:15px;height:195px;background:#cdcdcd"></div>
<div class="a" style="left:856px;top:117px;width:1px;height:570px;background:#e0e0e0"></div>
<div class="a" style="left:861px;top:117px;width:1px;height:570px;background:#a0a0a0"></div>
<div class="a" style="left:857px;top:386px;width:2px;height:33px;background:repeating-linear-gradient(#777 0 1px,transparent 1px 5px)"></div>
<div class="a" style="left:223px;top:670px;width:614px;height:17px;background:#f0f0f0"></div>
<div class="a" style="left:226px;top:672px;width:14px;height:14px;background:#ececec;border:1px solid #c9c9c9"></div>
<div class="a" style="left:243px;top:672px;width:14px;height:14px;background:#ececec;border:1px solid #c9c9c9"></div>
<div class="a" style="left:260px;top:672px;width:14px;height:14px;background:#ececec;border:1px solid #c9c9c9"></div>
<div class="a" style="left:277px;top:672px;width:14px;height:14px;background:#ececec;border:1px solid #c9c9c9"></div>
<svg style="left:229px;top:675px" width="70" height="9" viewBox="0 0 70 9"><path d="M1 0v8M8 0L3 4l5 4z" fill="#000" stroke="#000" stroke-width="1"/><path d="M24 0l-5 4 5 4z"/><path d="M37 0l5 4-5 4z"/><path d="M52 0l5 4-5 4zM58 0v8" fill="#000" stroke="#000"/></svg>
<div class="a" style="left:292px;top:670px;width:276px;height:1px;background:#606060"></div>
<svg style="left:290px;top:670px" width="290" height="17" viewBox="0 0 290 17"><path d="M2.5 .5L8.5 15.5H51.5L57.5 .5" fill="#fff" stroke="#606060"/><path d="M57.5 .5L51.5 15.5H105.5L111.5 .5" fill="#f0f0f0" stroke="#606060" stroke-width=".9"/><path d="M111.5 .5L105.5 15.5H204.5L210.5 .5" fill="#f0f0f0" stroke="#606060" stroke-width=".9"/><path d="M4 .5H57" stroke="#fff"/></svg>
<div class="a" style="left:292px;top:686px;width:276px;height:1px;background:#6a6a6a"></div>
<div class="t" style="left:300px;top:673px;font-weight:bold;font-size:12.5px;letter-spacing:-.5px">Layout</div>
<div class="t" style="left:349px;top:673px;font-size:12.5px;letter-spacing:-.4px">Controls</div>
<div class="t" style="left:404px;top:673px;font-size:12.5px;letter-spacing:-.45px">Dimension Lines</div>
<div class="a" style="left:567px;top:670px;width:5px;height:16px;border:1px solid #888;border-top:0;background:#f8f8f8"></div>
<svg style="left:578px;top:673px" width="8" height="10" viewBox="0 0 8 10"><path d="M6 1L2 5l4 4" stroke="#555" stroke-width="1.8" fill="none"/></svg>
<svg style="left:825px;top:673px" width="8" height="10" viewBox="0 0 8 10"><path d="M2 1l4 4-4 4" stroke="#555" stroke-width="1.8" fill="none"/></svg>
<div class="a" style="left:661px;top:671px;width:120px;height:15px;background:#cdcdcd"></div><svg style="left:251px;top:145px" width="586" height="525" viewBox="251 145 586 525">
<g stroke="#8c8c8c" stroke-width="1">
<rect x="519.5" y="187.5" width="95" height="86" fill="#cfe4f3"/>
<rect x="519.5" y="308.5" width="95" height="85" fill="#cfe4f3"/>
<path d="M567 432.5L623.8 468 567 504.2 510.6 468z" fill="#cfe4f3"/>
<rect x="383.5" y="504.5" width="95" height="86" fill="#ff9999"/>
<rect x="655.5" y="507.5" width="95" height="86" fill="#ccffcc"/>
</g>
<g stroke="#111" stroke-width="1.15" fill="none">
<path d="M567.2 273.5V301"/>
<path d="M567.2 393.5V422"/>
<path d="M510.8 467.8L435 501.4"/>
<path d="M623.6 467.7L696 503.5"/>
</g>
<g fill="#000">
<path d="M563 300h8l-4 11z"/>
<path d="M563 421h8l-4 11z"/>
<path d="M428 504.6L436.6 504.2 434 498.4z"/>
<path d="M702.5 506.8L696.7 500.4 693.9 506z"/>
</g>
<g font-family="Liberation Sans" font-size="16" text-anchor="middle" fill="#000">
<text x="567" y="226">Buy</text><text x="567" y="244">Supplies</text>
<text x="567" y="338">Build</text><text x="567" y="355.5">Next Big</text><text x="567" y="373">Thing</text>
<text x="563.5" y="464">Can I</text><text x="567" y="482">Sell It?</text>
<text x="428" y="543">Put In</text><text x="431" y="561">Toy Trunk</text>
<text x="703" y="555" font-weight="bold">Then Sell It</text>
</g>
<text x="468" y="492" font-family="Liberation Sans" font-size="15" fill="#ff2222" stroke="#ff2222" stroke-width=".5" text-anchor="middle" transform="rotate(-24 468 487)">No</text>
<text x="662" y="491" font-family="Liberation Sans" font-size="15" fill="#1c9a1c" stroke="#1c9a1c" stroke-width=".5" text-anchor="middle" transform="rotate(27 662 486)">Yes</text>
<g fill="#3ce83c" stroke="#111" stroke-width="1">
<rect x="651.5" y="503.5" width="8" height="8" rx="1.5"/>
<rect x="699.5" y="503.5" width="8" height="8" rx="1.5"/>
<rect x="746.5" y="503.5" width="8" height="8" rx="1.5"/>
<rect x="651.5" y="546.5" width="8" height="8" rx="1.5"/>
<rect x="746.5" y="546.5" width="8" height="8" rx="1.5"/>
<rect x="651.5" y="589.5" width="8" height="8" rx="1.5"/>
<rect x="699.5" y="589.5" width="8" height="8" rx="1.5"/>
<rect x="746.5" y="589.5" width="8" height="8" rx="1.5"/>
</g>
</svg>
<svg width="0" height="0" style="left:0;top:0"><defs>
<linearGradient id="gb" x1="0" y1="0" x2="0" y2="1"><stop offset="0" stop-color="#9fd0fb"/><stop offset="1" stop-color="#3d8de0"/></linearGradient>
<symbol id="i-line" viewBox="0 0 16 16"><path d="M1.5 14.5L14.5 1.5" stroke="#2a72c8" stroke-width="1.6"/></symbol>
<symbol id="i-arrow" viewBox="0 0 16 16"><path d="M1 8h13M9 3.5L14 8l-5 4.5" stroke="#2a76d2" stroke-width="1.8" fill="none"/></symbol>
<symbol id="i-rect" viewBox="0 0 16 16"><rect x="1" y="3.5" width="14" height="9" fill="url(#gb)" stroke="#1f5aa8"/></symbol>
<symbol id="i-ell" viewBox="0 0 16 16"><ellipse cx="8" cy="8" rx="7.5" ry="5" fill="url(#gb)" stroke="#1f5aa8"/></symbol>
<symbol id="i-T" viewBox="0 0 16 16"><path d="M1.5 1.5h13v4h-1.5c-.5-1.5-1-2-2.5-2H9.5v9.5c0 .8.5 1 2 1V15h-7v-1c1.5 0 2-.2 2-1V3.5H5c-1.5 0-2 .5-2.5 2H1.5z" fill="#2c5f8e"/></symbol>
<symbol id="i-pencil" viewBox="0 0 18 16"><path d="M1 7.5c1.5 0 2 6 6 6s5-1.5 9-1" stroke="#2a6ec8" stroke-width="1.5" fill="none"/><path d="M5.9 7.9L11.9 1.9 14.1 4.1 8.1 10.1z" fill="#f6cc38" stroke="#6a4a10" stroke-width=".7"/><path d="M5.9 7.9L8.1 10.1 5 11z" fill="#e8d0a0" stroke="#6a4a10" stroke-width=".6"/><path d="M11.9 1.9L13.9 -.1 16.1 2.1 14.1 4.1z" fill="#e8506a" stroke="#902040" stroke-width=".6"/></symbol>
<symbol id="i-conn" viewBox="0 0 16 16"><path d="M3 3.5h3l4 8h3" stroke="#2a6ec8" stroke-width="1.6" fill="none"/><circle cx="3" cy="3.3" r="2.3" fill="#4a9ef0" stroke="#1f5aa8" stroke-width=".7"/><circle cx="13" cy="11.7" r="2.3" fill="#4a9ef0" stroke="#1f5aa8" stroke-width=".7"/></symbol>
<symbol id="i-diam" viewBox="0 0 16 16"><path d="M8 .8L15.2 8 8 15.2.8 8z" fill="url(#gb)" stroke="#1f5aa8"/></symbol>
<symbol id="i-smile" viewBox="0 0 16 16"><circle cx="8" cy="8" r="7.2" fill="url(#gb)" stroke="#1f5aa8"/><circle cx="5.5" cy="6" r="1" fill="#1f5aa8"/><circle cx="10.5" cy="6" r="1" fill="#1f5aa8"/><path d="M4 9.5c2 3 6 3 8 0" stroke="#1f5aa8" fill="none"/></symbol>
<symbol id="i-darr" viewBox="0 0 16 16"><path d="M1 8l4.5-4v2.2h5V4L15 8l-4.5 4V9.8h-5V12z" fill="#8ec4f5" stroke="#1f5aa8" stroke-width=".9"/></symbol>
<symbol id="i-flow" viewBox="0 0 16 16"><rect x="1.5" y="1.5" width="13" height="13" fill="url(#gb)" stroke="#1f5aa8"/><path d="M1.5 4.5h13M4.5 4.5v10" stroke="#1f5aa8"/></symbol>
<symbol id="i-call" viewBox="0 0 16 16"><path d="M2.5 1.5h11a2 2 0 0 1 2 2v6a2 2 0 0 1-2 2H7l-4 3.5 1-3.5H2.5a2 2 0 0 1-2-2v-6a2 2 0 0 1 2-2z" fill="url(#gb)" stroke="#1f5aa8"/></symbol>
<symbol id="i-star" viewBox="0 0 16 16"><path d="M8 .8l2 5.2h5.5l-4.4 3.4 1.7 5.6L8 11.6 3.2 15l1.7-5.6L.5 6H6z" fill="url(#gb)" stroke="#1f5aa8"/></symbol>
<symbol id="i-more" viewBox="0 0 11 10"><rect x=".5" y=".5" width="10" height="9" fill="#fff" stroke="#3f6fb0"/><rect x=".5" y=".5" width="10" height="2.5" fill="#7fa8dc" stroke="#3f6fb0"/><path d="M3 7h1M5 7h1M7 7h1" stroke="#1f3f70"/></symbol>
<symbol id="i-minus" viewBox="0 0 9 9"><rect x=".5" y=".5" width="8" height="8" fill="#f4f6f8" stroke="#5d6f82"/><path d="M2 4.5h5" stroke="#333" stroke-width="1.2"/></symbol>
<symbol id="i-plus" viewBox="0 0 9 9"><rect x=".5" y=".5" width="8" height="8" fill="#f4f6f8" stroke="#5d6f82"/><path d="M2 4.5h5M4.5 2v5" stroke="#333" stroke-width="1.2"/></symbol>
</defs></svg>
<div class="a" style="left:862px;top:117px;width:272px;height:570px;background:#f0f0f0"></div>
<div class="a" style="left:865px;top:120px;width:269px;height:564px;border:1px solid #dcdcdc;border-right:1px solid #dadada;border-bottom:1px solid #d0d0d0"></div>
<div class="t" style="left:875px;top:129px;font-weight:bold;font-size:12px">Properties</div>
<svg style="left:1119px;top:127px" width="10" height="9" viewBox="0 0 10 9"><path d="M1 .5l8 8M9 .5l-8 8" stroke="#4d5864" stroke-width="1.6"/></svg>
<div class="a" style="left:866px;top:147px;width:251px;height:536px;background:#f0f0f0"></div>
<div class="a" style="left:1117px;top:147px;width:16px;height:536px;background:#f0f0f0"></div>
<div class="a" style="left:1117px;top:164px;width:15px;height:403px;background:#cdcdcd"></div>
<svg style="left:1120px;top:152px" width="10" height="7" viewBox="0 0 10 7"><path d="M1 6l4-4 4 4" stroke="#555" stroke-width="2" fill="none"/></svg>
<svg style="left:1120px;top:672px" width="10" height="7" viewBox="0 0 10 7"><path d="M1 1l4 4 4-4" stroke="#555" stroke-width="2" fill="none"/></svg>
<div class="a" style="left:866px;top:147px;width:251px;height:25px;background:linear-gradient(#e3e3e3,#f0f0f0)"></div>
<svg style="left:871px;top:157px" width="9" height="9"><use href="#i-minus"/></svg>
<div class="t" style="left:885px;top:157px;font-weight:bold;font-size:11.5px;letter-spacing:-.1px;color:#1a1a1a">Insert Shapes</div>
<div class="a" style="left:871px;top:174px;width:236px;height:30px;background:linear-gradient(#f2f2f2,#fdfdfd);border:1px solid #e2e2e2"></div>
<svg style="left:876px;top:181px" width="16" height="16"><use href="#i-line"/></svg>
<svg style="left:901px;top:181px" width="16" height="16"><use href="#i-arrow"/></svg>
<svg style="left:926px;top:181px" width="16" height="16"><use href="#i-rect"/></svg>
<svg style="left:951px;top:181px" width="16" height="16"><use href="#i-ell"/></svg>
<svg style="left:977px;top:181px" width="16" height="16"><use href="#i-T"/></svg>
<svg style="left:1000px;top:181px" width="18" height="16"><use href="#i-pencil"/></svg>
<div class="dd" style="left:1023px;top:187px"></div>
<svg style="left:1037px;top:181px" width="16" height="16"><use href="#i-conn"/></svg>
<div class="dd" style="left:1059px;top:187px"></div>
<svg style="left:1072px;top:181px" width="16" height="16"><use href="#i-arrow"/></svg>
<div class="dd" style="left:1095px;top:187px"></div>
<div class="a" style="left:871px;top:213px;width:219px;height:30px;background:linear-gradient(#f2f2f2,#fdfdfd);border:1px solid #e2e2e2"></div>
<svg style="left:875px;top:220px" width="16" height="16"><use href="#i-diam"/></svg>
<div class="dd" style="left:898px;top:226px"></div>
<svg style="left:911px;top:220px" width="16" height="16"><use href="#i-smile"/></svg>
<div class="dd" style="left:934px;top:226px"></div>
<svg style="left:947px;top:220px" width="16" height="16"><use href="#i-darr"/></svg>
<div class="dd" style="left:970px;top:226px"></div>
<svg style="left:984px;top:220px" width="16" height="16"><use href="#i-flow"/></svg>
<div class="dd" style="left:1006px;top:226px"></div>
<svg style="left:1019px;top:220px" width="16" height="16"><use href="#i-call"/></svg>
<div class="dd" style="left:1042px;top:226px"></div>
<svg style="left:1055px;top:220px" width="16" height="16"><use href="#i-star"/></svg>
<div class="dd" style="left:1078px;top:226px"></div>
<div class="a" style="left:866px;top:251px;width:251px;height:25px;background:linear-gradient(#e3e3e3,#f0f0f0)"></div>
<svg style="left:871px;top:261px" width="9" height="9"><use href="#i-minus"/></svg>
<div class="t" style="left:885px;top:261px;font-weight:bold;font-size:11.5px;letter-spacing:-.1px;color:#1a1a1a">Text</div>
<svg style="left:1100px;top:257px" width="11" height="10"><use href="#i-more"/></svg>
<div class="combo" style="left:872px;top:280px;width:178px;height:23px;border-color:#9a9a9a"></div>
<div class="t" style="left:875px;top:286px;font-size:12px">Arial</div>
<div class="cbtn" style="left:1032px;top:281px;width:17px;height:21px"></div>
<div class="chev" style="left:1037.0px;top:286.5px;width:6px;height:6px;border-width:0 2px 2px 0"></div>
<div class="combo" style="left:1056px;top:280px;width:51px;height:23px;border-color:#9a9a9a"></div>
<div class="t" style="left:1059px;top:286px;font-size:12px">18</div>
<div class="cbtn" style="left:1089px;top:281px;width:17px;height:21px"></div>
<div class="chev" style="left:1094.0px;top:286.5px;width:6px;height:6px;border-width:0 2px 2px 0"></div>
<div class="a" style="left:872px;top:312px;width:140px;height:31px;background:linear-gradient(#f2f2f2,#fdfdfd);border:1px solid #e2e2e2"></div>
<div class="hl" style="left:874px;top:314px;width:25px;height:27px"></div>
<div class="t" style="left:880.5px;top:319px;font-size:16px;font-weight:bold;color:#1d3a58">B</div>
<svg style="left:905px;top:320px" width="12" height="14" viewBox="0 0 12 14"><path d="M6 1h5M1 13h5M8.5 1L3.5 13" stroke="#1d3a58" stroke-width="1.8" fill="none"/></svg>
<svg style="left:929px;top:320px" width="13" height="15" viewBox="0 0 13 15"><path d="M2 .5v7.5c0 5 9 5 9 0V.5" stroke="#1d3a58" stroke-width="1.6" fill="none"/><path d="M0 14h13" stroke="#1d3a58" stroke-width="1.3"/></svg>
<div class="dd" style="left:950px;top:326px"></div>
<div class="t" style="left:964px;top:323px;font-size:7.5px;font-weight:bold;color:#333;text-decoration:line-through">ABC</div>
<svg style="left:988px;top:318px" width="20" height="18" viewBox="0 0 20 18"><text x="4" y="16" font-family="Liberation Sans" font-weight="bold" font-size="16" fill="#999">A</text><text x="1" y="14" font-family="Liberation Sans" font-weight="bold" font-size="16" fill="#2a5a8a">A</text></svg>
<div class="a" style="left:1056px;top:312px;width:54px;height:31px;background:linear-gradient(#f2f2f2,#fdfdfd);border:1px solid #e2e2e2"></div>
<svg style="left:1061px;top:318px" width="44" height="18" viewBox="0 0 44 18"><path d="M1 1v16M1 2h4M1 6h3M1 10h3M1 14h4" stroke="#6e8196" fill="none"/><text x="4" y="17" font-family="Liberation Sans" font-weight="bold" font-size="14" fill="#2a5a8a">A</text><path d="M12 5l3-3 3 3z" fill="#e8702a"/><path d="M28 1v16M28 2h4M28 6h3M28 10h3M28 14h4" stroke="#6e8196" fill="none"/><text x="31" y="17" font-family="Liberation Sans" font-weight="bold" font-size="12" fill="#2a5a8a">A</text><path d="M37 1h6l-3 3z" fill="#e8702a"/></svg>
<div class="a" style="left:872px;top:353px;width:54px;height:31px;background:linear-gradient(#f2f2f2,#fdfdfd);border:1px solid #e2e2e2"></div>
<svg style="left:876px;top:358px" width="46" height="20" viewBox="0 0 46 20"><text x="0" y="18" font-family="Liberation Sans" font-weight="bold" font-size="15" fill="#8a8a8a">A</text><text x="7" y="12" font-family="Liberation Sans" font-weight="bold" font-size="11" fill="#2a5a8a">A</text><path d="M8 18l3-3 3 3z" fill="#e8702a"/><text x="26" y="18" font-family="Liberation Sans" font-weight="bold" font-size="15" fill="#8a8a8a">A</text><text x="33" y="18" font-family="Liberation Sans" font-weight="bold" font-size="11" fill="#2a5a8a">A</text><path d="M34 3h6l-3 3z" fill="#e8702a"/></svg>
<div class="a" style="left:934px;top:353px;width:40px;height:31px;background:linear-gradient(#f2f2f2,#fdfdfd);border:1px solid #e2e2e2"></div>
<svg style="left:937px;top:358px" width="22" height="20" viewBox="0 0 22 20"><text x="0" y="10" font-family="Liberation Sans" font-weight="bold" font-size="10" fill="#2a5a8a">A V</text><path d="M8 1l4 9" stroke="#e02020" stroke-width="1.3"/><path d="M2 15h14M5 12l-3 3 3 3M13 12l3 3-3 3" stroke="#2a76d2" stroke-width="1.5" fill="none"/></svg>
<div class="dd" style="left:962px;top:367px"></div>
<div class="a" style="left:991px;top:353px;width:40px;height:31px;background:linear-gradient(#f2f2f2,#fdfdfd);border:1px solid #e2e2e2"></div>
<svg style="left:996px;top:357px" width="18" height="20" viewBox="0 0 18 20"><text x="2" y="14" font-family="Liberation Sans" font-weight="bold" font-size="15" fill="#2a5a8a">A</text><rect x="1" y="15" width="16" height="4" fill="#e00"/></svg>
<div class="dd" style="left:1019px;top:367px"></div>
<div class="a" style="left:866px;top:387px;width:251px;height:1px;background:#e6e6e6"></div>
<div class="a" style="left:866px;top:387px;width:251px;height:27px;background:linear-gradient(#e3e3e3,#f0f0f0)"></div>
<svg style="left:871px;top:397px" width="9" height="9"><use href="#i-plus"/></svg>
<div class="t" style="left:885px;top:397px;font-weight:bold;font-size:11.5px;letter-spacing:-.1px;color:#1a1a1a">Paragraph</div>
<svg style="left:1100px;top:393px" width="11" height="10"><use href="#i-more"/></svg>
<div class="a" style="left:866px;top:414px;width:251px;height:26px;background:linear-gradient(#e3e3e3,#f0f0f0)"></div>
<svg style="left:871px;top:424px" width="9" height="9"><use href="#i-minus"/></svg>
<div class="t" style="left:885px;top:424px;font-weight:bold;font-size:11.5px;letter-spacing:-.1px;color:#1a1a1a">Area</div>
<svg style="left:1100px;top:420px" width="11" height="10"><use href="#i-more"/></svg>
<div class="t" style="left:872px;top:446px;font-size:12px"><span style="text-decoration:underline;text-underline-offset:2px">F</span>ill:</div>
<div class="combo" style="left:872px;top:464px;width:116px;height:23px;border-color:#9a9a9a"></div>
<div class="t" style="left:875px;top:470px;font-size:12px">Color</div>
<div class="cbtn" style="left:970px;top:465px;width:17px;height:21px"></div>
<div class="chev" style="left:975.0px;top:470.5px;width:6px;height:6px;border-width:0 2px 2px 0"></div>
<div class="a" style="left:994px;top:462px;width:100px;height:27px;background:linear-gradient(#f2f2f2,#fdfdfd);border:1px solid #e2e2e2"></div>
<svg style="left:1002px;top:467px" width="16" height="16" viewBox="0 0 16 16"><path d="M1 8l5-6 6 6-5 6z" fill="#cfe3f7" stroke="#2a4a7a"/><path d="M4 6c0-4 4-5 6-2" stroke="#2a4a7a" fill="none"/><path d="M12 8c2 1 3 3 2 6" stroke="#333" stroke-width="1.5" fill="none"/></svg>
<div class="a" style="left:1019px;top:469px;width:56px;height:12px;background:#ccffcc;border:1px solid #2b4a78"></div>
<div class="dd" style="left:1082px;top:473px"></div>
<div class="t" style="left:872px;top:497px;font-size:12px"><span style="text-decoration:underline;text-underline-offset:2px">T</span>ransparency:</div>
<div class="combo" style="left:872px;top:516px;width:116px;height:23px;border-color:#9a9a9a"></div>
<div class="t" style="left:875px;top:522px;font-size:12px">None</div>
<div class="cbtn" style="left:970px;top:517px;width:17px;height:21px"></div>
<div class="chev" style="left:975.0px;top:522.5px;width:6px;height:6px;border-width:0 2px 2px 0"></div>
<div class="combo" style="left:994px;top:516px;width:116px;height:23px;border-color:#a8a8a8"></div>
<div class="t" style="left:997px;top:522px;font-size:12px">0%</div>
<div class="a" style="left:1093px;top:518px;width:15px;height:19px;background:#ececec;border:1px solid #c4c4c4"></div>
<div class="a" style="left:1093px;top:527px;width:15px;height:1px;background:#c4c4c4"></div>
<div class="a" style="left:1097px;top:521px;border-left:3.5px solid transparent;border-right:3.5px solid transparent;border-bottom:4px solid #222"></div>
<div class="a" style="left:1097px;top:530px;border-left:3.5px solid transparent;border-right:3.5px solid transparent;border-top:4px solid #222"></div>
<div class="a" style="left:866px;top:548px;width:251px;height:26px;background:linear-gradient(#e3e3e3,#f0f0f0)"></div>
<svg style="left:871px;top:558px" width="9" height="9"><use href="#i-minus"/></svg>
<div class="t" style="left:885px;top:558px;font-weight:bold;font-size:11.5px;letter-spacing:-.1px;color:#1a1a1a">Line</div>
<svg style="left:1100px;top:554px" width="11" height="10"><use href="#i-more"/></svg>
<div class="t" style="left:872px;top:579px;font-size:12px"><span style="text-decoration:underline;text-underline-offset:2px">W</span>idth:</div>
<div class="t" style="left:994px;top:579px;font-size:12px"><span style="text-decoration:underline;text-underline-offset:2px">C</span>olor:</div>
<div class="a" style="left:872px;top:594px;width:100px;height:27px;background:linear-gradient(#f2f2f2,#fdfdfd);border:1px solid #e2e2e2"></div>
<div class="a" style="left:877px;top:606px;width:76px;height:1px;background:#111"></div>
<div class="dd" style="left:960px;top:605px"></div>
<div class="a" style="left:994px;top:594px;width:100px;height:27px;background:linear-gradient(#f2f2f2,#fdfdfd);border:1px solid #e2e2e2"></div>
<svg style="left:999px;top:600px" width="18" height="16" viewBox="0 0 18 16"><path d="M2 12l8-9 3 2.5-8 9-3.5 1z" fill="#f4c53a" stroke="#8d5a10" stroke-width=".9"/><path d="M7 15h9" stroke="#2a4a7a" stroke-width="1.5"/></svg>
<div class="a" style="left:1019px;top:601px;width:56px;height:12px;background:#808080;border:1px solid #2b4a78"></div>
<div class="dd" style="left:1082px;top:605px"></div>
<div class="t" style="left:872px;top:633px;font-size:12px"><span style="text-decoration:underline;text-underline-offset:2px">S</span>tyle:</div>
<div class="t" style="left:994px;top:633px;font-size:12px"><span style="text-decoration:underline;text-underline-offset:2px">T</span>ransparency:</div>
<div class="combo" style="left:872px;top:651px;width:116px;height:22px;border-color:#9a9a9a"></div>
<div class="cbtn" style="left:970px;top:652px;width:17px;height:20px"></div>
<div class="chev" style="left:975.0px;top:657.0px;width:6px;height:6px;border-width:0 2px 2px 0"></div>
<div class="a" style="left:875px;top:661px;width:76px;height:1px;background:#111"></div>
<div class="t" style="left:957px;top:656px;font-size:12px;width:14px;overflow:hidden">Co</div>
<div class="combo" style="left:994px;top:651px;width:116px;height:22px;border-color:#a8a8a8"></div>
<div class="t" style="left:997px;top:657px;font-size:12px">0%</div>
<div class="a" style="left:1093px;top:653px;width:15px;height:18px;background:#ececec;border:1px solid #c4c4c4"></div>
<div class="a" style="left:1093px;top:662px;width:15px;height:1px;background:#c4c4c4"></div>
<div class="a" style="left:1097px;top:656px;border-left:3.5px solid transparent;border-right:3.5px solid transparent;border-bottom:4px solid #222"></div>
<div class="a" style="left:1097px;top:664px;border-left:3.5px solid transparent;border-right:3.5px solid transparent;border-top:4px solid #222"></div>
<div class="a" style="left:1134px;top:117px;width:39px;height:570px;background:#f0f0f0;border-right:1px solid #9c9c9c"></div>
<div class="a" style="left:1171px;top:117px;width:1px;height:570px;background:#fff"></div>
<svg style="left:1149px;top:131px" width="11" height="10" viewBox="0 0 11 10"><path d="M0 1.5h7M0 3.5h7M0 5.5h7" stroke="#333"/><path d="M5 7h6l-3 3z" fill="#1a3a6a"/></svg>
<div class="a" style="left:1143px;top:155px;width:23px;height:1px;background:#dedede"></div>
<div class="a" style="left:1138px;top:159px;width:32px;height:32px;border:1px solid #9a9a9a;border-radius:3px;background:#f3f3f3"></div>
<svg style="left:1143px;top:163px" width="22" height="24" viewBox="0 0 22 24"><ellipse cx="11" cy="21.5" rx="9" ry="1.8" fill="#d0d0d0"/><path d="M11 1l9.5 4.5L11 10 1.5 5.5z" fill="#4ab4f0"/><path d="M1.5 5.5L11 10v10l-9.5-4.5z" fill="#2a8ee0"/><path d="M11 10l9.5-4.5v10L11 20z" fill="#8ccf3a"/><path d="M6.25 3.25L15.75 7.75M15.75 3.25L6.25 7.75M1.5 10.5L11 15M6.25 7.75v10M11 15l9.5-4.5M15.75 7.75v10" stroke="#fff" stroke-width=".8" fill="none"/><path d="M11 10v10M1.5 5.5L11 10l9.5-4.5" stroke="#fff" stroke-width=".6" fill="none"/></svg>
<svg style="left:1143px;top:197px" width="23" height="23" viewBox="0 0 23 23"><ellipse cx="12" cy="21" rx="9" ry="1.8" fill="#ccc"/><path d="M5 16L10 4l8 9z" fill="#2a7ac8"/><path d="M10 4c2 3 6 5 8 9" stroke="#173a6a" stroke-width="3" fill="none"/><path d="M4 6c2-3 5-3 7-1" stroke="#e8861a" stroke-width="2.5" fill="none"/><path d="M13 16c2-3 6-3 6 1" stroke="#5ab030" stroke-width="3" fill="none"/><circle cx="3" cy="10" r="2" fill="#f060b0"/><circle cx="12" cy="2.5" r="1.8" fill="#c070e0"/><path d="M18 1l1.2 2.5 2.6.3-2 1.8.6 2.6-2.4-1.3-2.3 1.3.5-2.6-2-1.8 2.7-.3z" fill="#f6c640"/><circle cx="20" cy="10" r="1.7" fill="#f05060"/></svg>
<svg style="left:1143px;top:232px" width="23" height="22" viewBox="0 0 23 22"><ellipse cx="12" cy="20" rx="9" ry="1.8" fill="#ccc"/><path d="M1 8l17-6 4 11-17 6z" fill="#fff" stroke="#9aa" stroke-width=".8"/><path d="M3 8.5l13-4.5 3 8-13 4.5z" fill="#6ab8ea"/><path d="M6 15l4-5 3 3 2-1 2 2z" fill="#5a9a3a"/><path d="M8 11l2-2 2 2v3H8z" fill="#fff" stroke="#2a4a7a" stroke-width=".6"/><path d="M2 7l4-1.5" stroke="#5ac030" stroke-width="2"/></svg>
<svg style="left:1143px;top:268px" width="23" height="23" viewBox="0 0 23 23"><circle cx="11" cy="11" r="10" fill="#fff" stroke="#f0a020" stroke-width="2.2"/><path d="M16 5l-5.5 4.5 2 2z" fill="#e02828"/><path d="M6 17l4.5-7.5 2 2z" fill="#2a6ac8"/><text x="9" y="7" font-family="Liberation Sans" font-size="6" font-weight="bold" fill="#333">N</text></svg><div class="a" style="left:8px;top:687px;width:1166px;height:32px;background:#f3f4f6;border-top:1px solid #a0a0a0"></div>
<div class="a" style="left:223px;top:687px;width:633px;height:1px;background:#e4e4e4"></div>
<div class="a" style="left:8px;top:688px;width:810px;height:31px;background:#f5f6f7;border-top:1px solid #fff;border-right:1px solid #dcdddf;border-bottom:1px solid #dcdddf"></div>
<div class="grip" style="left:12px;top:694px;height:18px"></div>
<div class="hl" style="left:20px;top:690px;width:25px;height:27px"></div>
<svg style="left:27px;top:695px" width="11" height="17" viewBox="0 0 11 17"><path d="M1.5 1v13l3-3 2.5 5 2-1-2.5-5H10z" fill="#fff" stroke="#111" stroke-width="1.1"/></svg>
<div class="sep" style="left:48px;top:696px"></div>
<svg style="left:57px;top:695px" width="16" height="16"><use href="#i-line"/></svg>
<svg style="left:82px;top:695px" width="16" height="16"><use href="#i-arrow"/></svg>
<svg style="left:107px;top:695px" width="16" height="16"><use href="#i-rect"/></svg>
<svg style="left:131px;top:695px" width="16" height="16"><use href="#i-ell"/></svg>
<svg style="left:158px;top:695px" width="16" height="16"><use href="#i-T"/></svg>
<div class="sep" style="left:181px;top:696px"></div>
<svg style="left:188px;top:695px" width="18" height="16"><use href="#i-pencil"/></svg>
<div class="dd" style="left:212px;top:701px"></div>
<svg style="left:226px;top:695px" width="16" height="16"><use href="#i-conn"/></svg>
<div class="dd" style="left:248px;top:701px"></div>
<svg style="left:262px;top:695px" width="16" height="16"><use href="#i-arrow"/></svg>
<div class="dd" style="left:284px;top:701px"></div>
<svg style="left:297px;top:695px" width="16" height="16"><use href="#i-diam"/></svg>
<div class="dd" style="left:320px;top:701px"></div>
<svg style="left:333px;top:695px" width="16" height="16"><use href="#i-smile"/></svg>
<div class="dd" style="left:356px;top:701px"></div>
<svg style="left:369px;top:695px" width="16" height="16"><use href="#i-darr"/></svg>
<div class="dd" style="left:392px;top:701px"></div>
<svg style="left:405px;top:695px" width="16" height="16"><use href="#i-flow"/></svg>
<div class="dd" style="left:428px;top:701px"></div>
<svg style="left:441px;top:695px" width="16" height="16"><use href="#i-call"/></svg>
<div class="dd" style="left:464px;top:701px"></div>
<svg style="left:477px;top:695px" width="16" height="16"><use href="#i-star"/></svg>
<div class="dd" style="left:500px;top:701px"></div>
<div class="sep" style="left:513px;top:696px"></div>
<svg style="left:522px;top:695px" width="17" height="16" viewBox="0 0 17 16"><path d="M3 13l1-7 6-4 5 1-3 5 3 5z" fill="none" stroke="#2a5a8a" stroke-width="1.1"/><g fill="#9cc8f0" stroke="#1f4f88" stroke-width=".9"><circle cx="3" cy="13" r="1.6"/><circle cx="4" cy="6" r="1.6"/><circle cx="10" cy="2" r="1.6"/><circle cx="15" cy="3" r="1.6"/><circle cx="12" cy="8" r="1.6"/><circle cx="15" cy="13" r="1.6"/></g></svg>
<svg style="left:548px;top:695px" width="16" height="16" viewBox="0 0 16 16"><path d="M3 13l8-9 3 2.5-8 9z" fill="#f4b83a" stroke="#8d5a10" stroke-width=".9"/><path d="M11 4l2-3 3 2-2 3z" fill="#e8a020"/><circle cx="3" cy="14" r="1.5" fill="#2a5a8a"/></svg>
<div class="sep" style="left:571px;top:696px"></div>
<svg style="left:580px;top:694px" width="17" height="17" viewBox="0 0 17 17"><path d="M6 4l2.5-3 2.5 3" stroke="#666" fill="none"/><rect x="1" y="4" width="15" height="12" fill="#e8b048" stroke="#8a4a10"/><rect x="3" y="6" width="11" height="8" fill="#fff" stroke="#8a4a10" stroke-width=".6"/><text x="5.2" y="13" font-family="Liberation Sans" font-weight="bold" font-size="7.5" fill="#2a4a7a">A</text></svg>
<svg style="left:604px;top:694px" width="18" height="17" viewBox="0 0 18 17"><circle cx="12" cy="6" r="5.5" fill="#f6c030" stroke="#b07010" stroke-width=".8"/><rect x="1" y="6" width="9" height="9" fill="#e85a20" stroke="#902a10" stroke-width=".8"/><path d="M9 16l4-8 4 8z" fill="#4a7ab8" stroke="#1a3a6a" stroke-width=".8"/></svg>
<svg style="left:630px;top:694px" width="17" height="17" viewBox="0 0 17 17"><path d="M6 4l2.5-3 2.5 3" stroke="#666" fill="none"/><rect x="1" y="4" width="15" height="12" fill="#e8b048" stroke="#8a4a10"/><rect x="3" y="6" width="11" height="8" fill="#6ab0e0"/><path d="M3 14l4-4 3 2 4-3v5z" fill="#4a9a3a"/></svg>
<div class="sep" style="left:654px;top:696px"></div>
<svg style="left:662px;top:695px" width="17" height="16" viewBox="0 0 17 16"><path d="M8 14A6 6 0 1 1 14 8" stroke="#2a5a8a" stroke-width="3.5" fill="none"/><path d="M8 14A6 6 0 1 1 14 8" stroke="#8ab8e0" stroke-width="1.5" fill="none"/><path d="M10 8h7l-3.5 4z" fill="#2a5a8a"/></svg>
<div class="dd" style="left:685px;top:701px"></div>
<div class="hl" style="left:695px;top:690px;width:36px;height:27px"></div>
<div class="a" style="left:719px;top:691px;width:1px;height:25px;background:#99c4ea"></div>
<svg style="left:697px;top:695px" width="18" height="17" viewBox="0 0 18 17"><path d="M9 0v17" stroke="#5ab030" stroke-width="2.5"/><path d="M0 8.5h6M3 6l3 2.5-3 2.5M18 8.5h-6M15 6l-3 2.5 3 2.5" stroke="#e85020" stroke-width="1.6" fill="none"/><rect x="6.5" y="6" width="5" height="5" fill="#3a8ae0"/></svg>
<div class="dd" style="left:722px;top:701px"></div>
<svg style="left:734px;top:695px" width="17" height="16" viewBox="0 0 17 16"><rect x="1" y="5" width="10" height="10" fill="#2a5a8a"/><rect x="5" y="1" width="11" height="10" fill="#f6c030" stroke="#9a6a10"/></svg>
<div class="dd" style="left:757px;top:701px"></div>
<div class="sep" style="left:770px;top:696px"></div>
<svg style="left:777px;top:694px" width="18" height="17" viewBox="0 0 18 17"><path d="M2 2h5v5h4v4h5v5h-6v-5H6V7H2z" fill="#e4e4e4" stroke="#c4c4c4"/></svg>
<div class="tbend" style="left:806px;top:691px;height:25px"></div>
<div class="a" style="left:8px;top:719px;width:1166px;height:22px;background:#f0f0f0;border-top:1px solid #fdfdfd"></div>
<div class="t" style="left:18px;top:726px;font-size:12px">Rectangle selected</div>
<div class="a" style="left:432px;top:723px;width:1px;height:17px;background:#a8a8a8"></div>
<div class="a" style="left:654px;top:723px;width:1px;height:17px;background:#a8a8a8"></div>
<div class="a" style="left:670px;top:723px;width:1px;height:17px;background:#a8a8a8"></div>
<div class="a" style="left:698px;top:723px;width:1px;height:17px;background:#a8a8a8"></div>
<div class="a" style="left:809px;top:723px;width:1px;height:17px;background:#a8a8a8"></div>
<div class="a" style="left:994px;top:723px;width:1px;height:17px;background:#a8a8a8"></div>
<div class="a" style="left:1137px;top:723px;width:1px;height:17px;background:#a8a8a8"></div>
<svg style="left:440px;top:724px" width="15" height="12" viewBox="0 0 15 12"><path d="M4 0v7M0 3h7" stroke="#1a3ac8"/><path d="M4.5 4.5h10v7h-10z" stroke="#333" stroke-dasharray="1 1" fill="none"/></svg>
<div class="t" style="left:460px;top:726px;font-size:12px">5.45 / 6.00</div>
<svg style="left:547px;top:723px" width="15" height="13" viewBox="0 0 15 13"><path d="M3.5 2.5h10v10h-10z" stroke="#333" stroke-dasharray="1 1" fill="none"/><path d="M0 7h2M1 6v2M8 0v2" stroke="#333"/></svg>
<div class="t" style="left:567px;top:726px;font-size:12px;word-spacing:-1.2px;letter-spacing:-.25px">1.50 x 1.35</div>
<div class="t" style="left:705px;top:726px;font-size:12px">Slide 1 / 1 (Layout)</div>
<div class="t" style="left:815px;top:726px;font-size:12px">Default</div>
<svg style="left:999px;top:725px" width="13" height="13" viewBox="0 0 13 13"><circle cx="6.5" cy="6.5" r="5.5" fill="#d4e2ee" stroke="#4a5a6a"/><path d="M3.5 6.5h6" stroke="#1a4a8a" stroke-width="1.5"/></svg>
<div class="a" style="left:1016px;top:731px;width:97px;height:1px;background:#777"></div>
<div class="a" style="left:1016px;top:728px;width:1px;height:4px;background:#777"></div>
<div class="a" style="left:1037px;top:725px;width:1px;height:12px;background:#777"></div>
<div class="a" style="left:1063px;top:725px;width:1px;height:12px;background:#777"></div>
<div class="a" style="left:1042px;top:727px;width:8px;height:8px;border-radius:50%;background:#6a8aa8;border:1px solid #3a4a5a"></div>
<svg style="left:1117px;top:725px" width="13" height="13" viewBox="0 0 13 13"><circle cx="6.5" cy="6.5" r="5.5" fill="#d4e2ee" stroke="#4a5a6a"/><path d="M3.5 6.5h6M6.5 3.5v6" stroke="#1a4a8a" stroke-width="1.5"/></svg>
<div class="t" style="left:1142px;top:726px;font-size:12px;letter-spacing:-.6px">66%</div>
<div class="a" style="left:723px;top:665px;width:62px;height:21px;background:#ffffe1;border:1px solid #000;box-shadow:2px 2px 3px rgba(0,0,0,.45)"></div>
<div class="t" style="left:727px;top:670px;font-size:12px;letter-spacing:-.1px">Alignment</div></body></html>
